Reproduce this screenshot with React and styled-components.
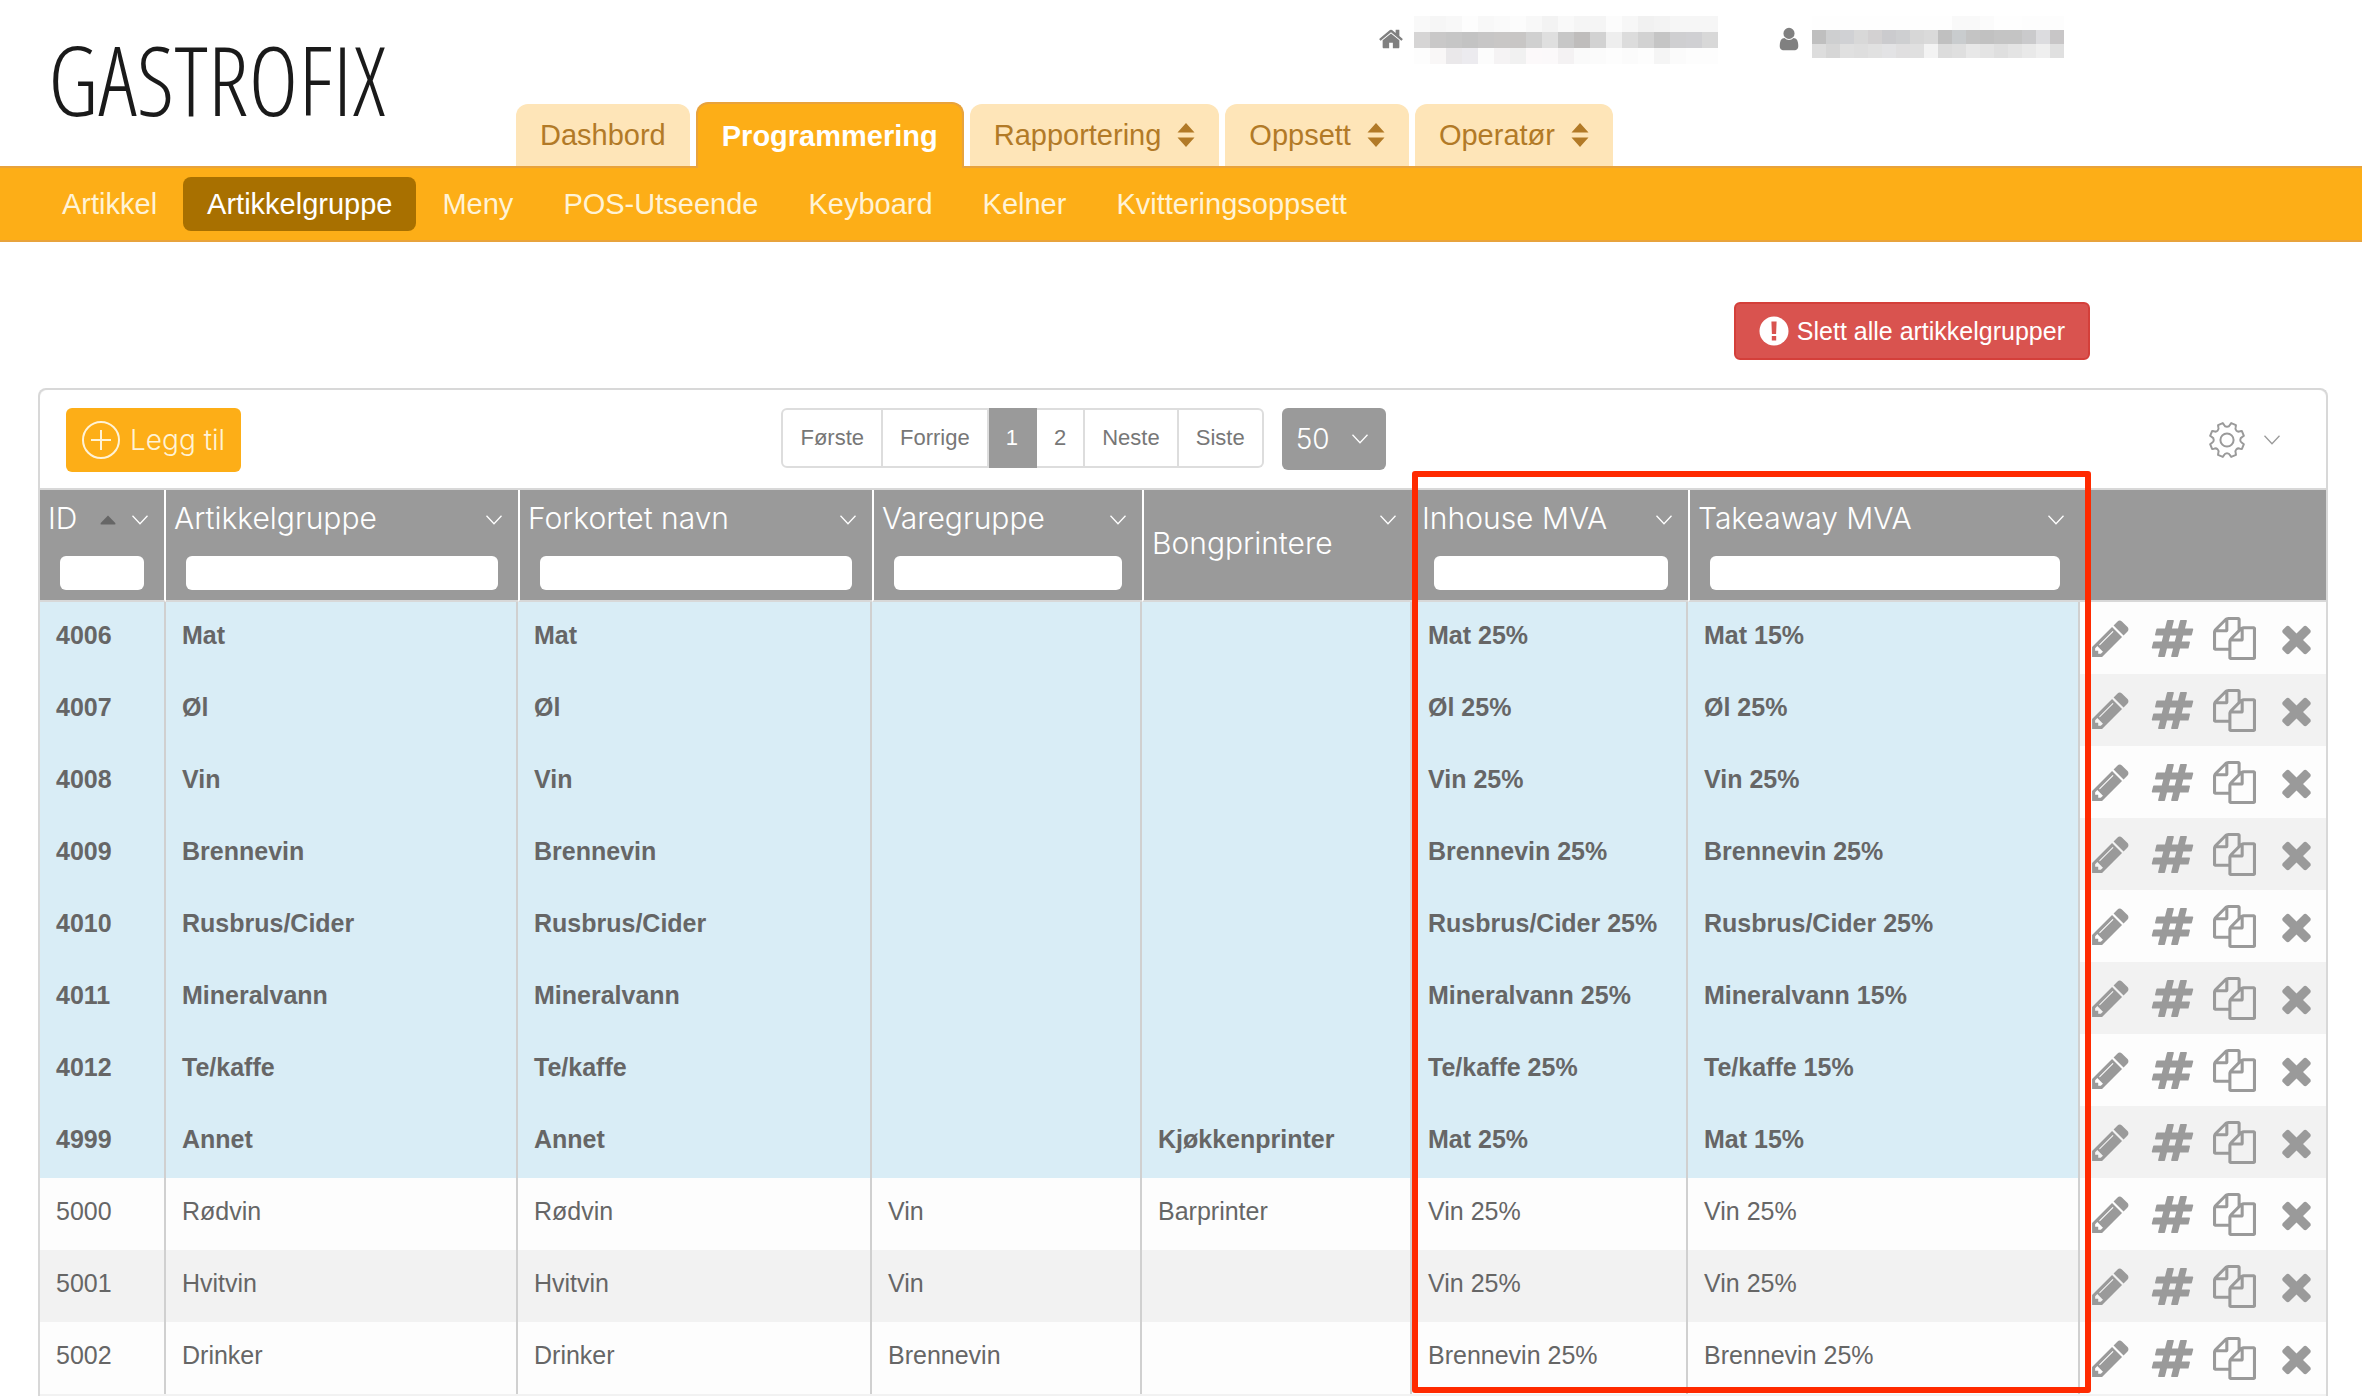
import React, { useState } from "react";
import styled, { createGlobalStyle } from "styled-components";

const GlobalStyle = createGlobalStyle`
  *, *::before, *::after {
    box-sizing: border-box;
  }
  body {
    margin: 0;
    background: #fff;
    color: #666;
    font-family: "Liberation Sans", Arial, sans-serif;
    font-size: 25px;
  }
  button, input, select {
    font: inherit;
    margin: 0;
  }
`;

const lightFont = `"Inter", "Liberation Sans", sans-serif`;

const Page = styled.div`
  display: flex;
  flex-direction: column;
  height: 100vh;
  overflow: hidden;
`;

const Header = styled.header`
  display: flex;
  height: 166px;
`;

const Logo = styled.a`
  display: flex;
  align-items: center;
  width: 516px;
  padding: 0 0 8px 48px;
  color: #1a1a1a;
  font-family: "Open Sans Condensed Light", "Roboto Condensed Light", "Roboto Thin", "Roboto", sans-serif;
  font-size: 96px;
  font-weight: 300;
  line-height: 1;
  text-decoration: none;
`;

const HeaderMain = styled.div`
  display: flex;
  flex: 1;
  flex-direction: column;
  justify-content: space-between;
`;

const Account = styled.div`
  display: flex;
  gap: 58px;
  padding: 16px 0 0 862px;
`;

const AccountItem = styled.div`
  display: flex;
  align-items: flex-start;
  gap: 10px;
  color: #808080;

  > svg {
    margin-top: 10px;
  }
`;

const Mosaic = styled.div`
  display: grid;
  grid-template-columns: repeat(${props => props.columns}, ${props => props.size}px);
  grid-auto-rows: ${props => props.size}px;
`;

const MosaicCell = styled.span`
  background: ${props => props.tone};
`;

const Tabs = styled.nav`
  display: flex;
  align-items: flex-end;
  gap: 6px;
  position: relative;
  z-index: 1;
`;

const Tab = styled.a`
  display: flex;
  align-items: center;
  gap: 16px;
  height: ${props => (props.$active ? 66 : 62)}px;
  margin-bottom: ${props => (props.$active ? -2 : 0)}px;
  padding: 0 24px;
  border: ${props => (props.$active ? "2px solid #e8a33c" : "0")};
  border-bottom: 0;
  border-radius: 12px 12px 0 0;
  background: ${props => (props.$active ? "#fdae17" : "#fee5b8")};
  color: ${props => (props.$active ? "#fff" : "#b27a27")};
  font-size: 29px;
  font-weight: ${props => (props.$active ? 700 : 400)};
  text-decoration: none;
`;

const SubNav = styled.nav`
  display: flex;
  align-items: center;
  gap: 2px;
  height: 76px;
  padding: 0 38px;
  border-top: 2px solid #e8a33c;
  border-bottom: 2px solid #e8a33c;
  background: #fdae17;
`;

const SubNavLink = styled.a`
  padding: 0 24px;
  border-radius: 8px;
  background: ${props => (props.$active ? "#a87000" : "transparent")};
  color: ${props => (props.$active ? "#fff" : "#fff3d6")};
  font-size: 29px;
  line-height: 54px;
  text-decoration: none;
`;

const Actions = styled.div`
  display: flex;
  justify-content: flex-end;
  padding: 60px 272px 28px 38px;
`;

const DangerButton = styled.button`
  display: flex;
  align-items: center;
  gap: 8px;
  height: 58px;
  padding: 0 23px;
  border: 2px solid #d43f3a;
  border-radius: 6px;
  background: #d9534f;
  color: #fff;
`;

const Panel = styled.main`
  flex: 1;
  margin: 0 34px 0 38px;
  border: 2px solid #d8d8d8;
  border-bottom: 0;
  border-radius: 8px 8px 0 0;
  background: #f2f2f2;
`;

const Toolbar = styled.div`
  display: grid;
  grid-template-columns: 4fr auto 5fr;
  align-items: start;
  height: 98px;
  padding: 18px 46px 0 26px;
  border-radius: 8px 8px 0 0;
  background: #fff;
`;

const AddButton = styled.button`
  display: flex;
  align-items: center;
  justify-self: start;
  gap: 10px;
  height: 64px;
  padding: 0 16px;
  border: 0;
  border-radius: 6px;
  background: #fdae17;
  color: #fff3d6;
  font-family: ${lightFont};
  font-size: 28px;
  font-weight: 300;
`;

const Paging = styled.div`
  display: flex;
  align-items: flex-start;
  gap: 18px;
`;

const PageList = styled.div`
  display: flex;
  height: 60px;
`;

const PageButton = styled.button`
  padding: 0 17px;
  border: 2px solid ${props => (props.$active ? "#9a9a9a" : "#ddd")};
  border-left-width: ${props => (props.$joined ? 0 : 2)}px;
  background: ${props => (props.$active ? "#9a9a9a" : "#fff")};
  color: ${props => (props.$active ? "#fff" : "#777")};
  font-size: 22px;

  &:first-child {
    border-radius: 6px 0 0 6px;
  }
  &:last-child {
    border-radius: 0 6px 6px 0;
  }
`;

const SizePicker = styled.div`
  display: grid;
  align-items: center;
  width: 104px;
  height: 62px;
  border-radius: 6px;
  background: #9a9a9a;
  color: #fff;

  > * {
    grid-area: 1 / 1;
  }
  > svg {
    justify-self: end;
    margin-right: 18px;
    pointer-events: none;
  }
`;

const SizeSelect = styled.select`
  width: 100%;
  height: 100%;
  padding: 0 14px;
  border: 0;
  background: transparent;
  color: #fff;
  appearance: none;
  font-family: ${lightFont};
  font-size: 28px;
  font-weight: 300;
`;

const SettingsButton = styled.button`
  display: flex;
  align-items: center;
  justify-self: end;
  gap: 18px;
  height: 64px;
  padding: 0;
  border: 0;
  background: transparent;
  color: #9a9a9a;
`;

const TableArea = styled.div`
  position: relative;
`;

const Table = styled.table`
  width: 100%;
  table-layout: fixed;
  border-spacing: 0;
  border-top: 2px solid #d8d8d8;
`;

const HeadCell = styled.th`
  height: 112px;
  padding: 0;
  border: 0 solid #fff;
  border-left-width: ${props => (props.$divider === "left" ? 2 : 0)}px;
  border-right-width: ${props => (props.$divider === "right" ? 2 : 0)}px;
  border-bottom: 2px solid #d8d8d8;
  background: #9a9a9a;
  color: #fff;
  font-family: ${lightFont};
  font-size: 30px;
  font-weight: 300;
  text-align: left;
  vertical-align: top;
`;

const HeadTitle = styled.div`
  display: flex;
  align-items: stretch;
  height: ${props => (props.$tall ? 110 : 60)}px;
  padding: 0 16px 0 8px;
`;

const HeadLabel = styled.label`
  flex: 1;
  align-self: center;
  padding-bottom: 4px;
  white-space: nowrap;
`;

const HeadIcons = styled.span`
  display: flex;
  align-items: center;
  gap: 16px;
  height: 60px;
`;

const Filter = styled.input`
  display: block;
  width: calc(100% - 40px);
  height: 34px;
  margin: 6px 20px 0;
  padding: 0 8px;
  border: 0;
  border-radius: 6px;
  background: #fff;
  color: #666;
  font-size: 22px;
`;

const Row = styled.tr`
  background: #fdfdfd;
  font-weight: ${props => (props.$top ? 700 : 400)};

  &:nth-child(even) {
    background: #f2f2f2;
  }
`;

const Cell = styled.td`
  height: 72px;
  padding: 0 16px 6px;
  border-right: 2px solid #d0d0d0;
  background: ${props => (props.$top ? "#d9edf6" : "transparent")};
  white-space: nowrap;
`;

const ActionCell = styled.td`
  padding: 0 9px;
`;

const RowActions = styled.div`
  display: flex;
  gap: 19px;
`;

const IconButton = styled.button`
  display: flex;
  padding: 0;
  border: 0;
  background: transparent;
  color: #9a9a9a;
`;

// Outline round the two VAT columns
const Highlight = styled.div`
  position: absolute;
  top: -17px;
  bottom: 1px;
  left: 60%;
  right: 10.3%;
  border: 6px solid #ff2a00;
  border-radius: 3px;
  pointer-events: none;
`;

const glyphs = {
  pencil:
    "M491 1536l91-91-235-235-91 91v107h128v128h107zm523-928q0-22-22-22-10 0-17 7l-542 542q-7 7-7 17 0 22 22 22 10 0 17-7l542-542q7-7 7-17zm-54-192l416 416-832 832h-416v-416zm683 96q0 53-37 90l-166 166-416-416 166-165q36-38 90-38 53 0 91 38l235 234q37 39 37 91z",
  hash:
    "M991 1024l64-256h-254l-64 256h254zm768-504l-56 224q-7 24-31 24h-327l-64 256h311q15 0 25 12 10 14 6 28l-56 224q-5 24-31 24h-327l-81 328q-7 24-31 24h-224q-16 0-26-12-9-12-6-28l78-312h-254l-81 328q-7 24-31 24h-225q-15 0-25-12-9-12-6-28l78-312h-311q-15 0-25-12-9-12-6-28l56-224q7-24 31-24h327l64-256h-311q-15 0-25-12-10-14-6-28l56-224q5-24 31-24h327l81-328q7-24 32-24h224q15 0 25 12 9 12 6 28l-78 312h254l81-328q7-24 32-24h224q15 0 25 12 9 12 6 28l-78 312h311q15 0 25 12 9 12 6 28z",
  copy:
    "M1696 384q40 0 68 28t28 68v1216q0 40-28 68t-68 28h-960q-40 0-68-28t-28-68v-288h-544q-40 0-68-28t-28-68v-672q0-40 20-88t48-76l408-408q28-28 76-48t88-20h416q40 0 68 28t28 68v328q68-40 128-40h416zm-544 213l-299 299h299v-299zm-640-384l-299 299h299v-299zm196 647l316-316v-416h-384v416q0 40-28 68t-68 28h-416v640h512v-256q0-40 20-88t48-76zm956 804v-1152h-384v416q0 40-28 68t-68 28h-416v640h896z",
  remove:
    "M1490 1322q0 40-28 68l-136 136q-28 28-68 28t-68-28l-294-294-294 294q-28 28-68 28t-68-28l-136-136q-28-28-28-68t28-68l294-294-294-294q-28-28-28-68t28-68l136-136q28-28 68-28t68 28l294 294 294-294q28-28 68-28t68 28l136 136q28 28 28 68t-28 68l-294 294 294 294q28 28 28 68z",
  home:
    "M1472 992v480q0 26-19 45t-45 19h-384v-384h-256v384h-384q-26 0-45-19t-19-45v-480q0-1 .5-3t.5-3l575-474 575 474q1 2 1 6zm223-69l-62 74q-8 9-21 11h-3q-13 0-21-7l-692-577-692 577q-12 8-24 7-13-2-21-11l-62-74q-8-10-7-23.5t11-21.5l719-599q32-26 76-26t76 26l244 204v-195q0-14 9-23t23-9h192q14 0 23 9t9 23v408l219 182q10 8 11 21.5t-7 23.5z",
  user:
    "M1536 1399q0 109-62.5 187t-150.5 78h-854q-88 0-150.5-78t-62.5-187q0-85 8.5-160.5t31.5-152 58.5-131 94-89 134.5-34.5q131 128 313 128t313-128q76 0 134.5 34.5t94 89 58.5 131 31.5 152 8.5 160.5zm-256-887q0 159-112.5 271.5t-271.5 112.5-271.5-112.5-112.5-271.5 112.5-271.5 271.5-112.5 271.5 112.5 112.5 271.5z"
};

const Glyph = ({ name, size }) => (
  <svg width={size} height={size} viewBox="0 0 1792 1792" fill="currentColor" aria-hidden="true">
    <path d={glyphs[name]} />
  </svg>
);

const Chevron = () => (
  <svg width="16" height="10" viewBox="0 0 16 10" fill="none" stroke="currentColor" strokeWidth="1.3" aria-hidden="true">
    <path d="M0.5 0.8L8 8.8L15.5 0.8" />
  </svg>
);

const SortUp = () => (
  <svg width="16" height="10" viewBox="0 0 16 10" fill="#666" aria-hidden="true">
    <path d="M8 0.5L15.3 8Q16 9.6 14.6 9.6H1.4Q0 9.6 0.7 8Z" />
  </svg>
);

const UpDown = () => (
  <svg width="18" height="24" viewBox="0 0 18 24" fill="currentColor" aria-hidden="true">
    <path d="M9 0L17.5 9.6H0.5ZM9 24L17.5 14.4H0.5Z" />
  </svg>
);

const PlusCircle = () => (
  <svg width="38" height="38" viewBox="0 0 38 38" fill="none" stroke="currentColor" strokeWidth="2" aria-hidden="true">
    <circle cx="19" cy="19" r="18" />
    <path d="M19 9V29M9 19H29" />
  </svg>
);

const Warning = () => (
  <svg width="30" height="30" viewBox="0 0 30 30" aria-hidden="true">
    <circle cx="15" cy="15" r="14.5" fill="#fff" />
    <path d="M12.4 5.5H17.6L17.1 18H12.9ZM12.8 20H17.2V24.5H12.8Z" fill="#d9534f" />
  </svg>
);

// Eight teeth: one is drawn and turned round the centre
const toothAngles = [0, 45, 90, 135, 180, 225, 270, 315];
const Gear = () => {
  const points = toothAngles
    .map((angle, i) => {
      const at = (r, deg) => {
        const a = ((angle + deg) * Math.PI) / 180;
        return `${(19 + r * Math.sin(a)).toFixed(2)} ${(19 - r * Math.cos(a)).toFixed(2)}`;
      };
      return `${i ? "L" : "M"}${at(15.5, 11)}L${at(17.4, 14)}L${at(17.4, 31)}L${at(15.5, 34)}A3.2 3.2 0 0 0 ${at(15.5, 56)}`;
    })
    .join("");
  return (
    <svg width="38" height="38" viewBox="0 0 38 38" fill="none" stroke="currentColor" strokeWidth="2" strokeLinejoin="round" aria-hidden="true">
      <path d={`${points}Z`} />
      <circle cx="19" cy="19" r="6.6" />
    </svg>
  );
};

const placeTones = [
  "#f9f9f9 #f6f6f6 #f8f8f8 #fdfdfd #f8f8f8 #fafafa #fcfcfc #f8f8f8 #f3f3f3 #f9f9f9 #f5f5f5 #f5f5f5 #fcfcfc #f7f7f7 #f1f1f1 #f3f3f3 #f6f6f6 #f6f6f6 #f6f6f6",
  "#d6d5d5 #c9c8c8 #c6c6c6 #c3c3c3 #c7c6c6 #c9c7c6 #c8c6c5 #d0d0d0 #dfdfdf #c7c7c7 #bfbdbc #d2d2d2 #eeeeee #dcdcdc #d2d2d2 #c5c5c5 #cfcfd1 #d0d0d3 #d8d8d8",
  "#fdfdfd #f9f7f7 #eae8ea #ecebef #fcfcfc #f5f3f4 #f1f1f1 #fcf9fa #fbf9fa #f4f2f3 #fafafa #fbfbfb #fdfdfd #fbfbfb #fdfdfd #f5f5f5 #fbfbfb #fdfdfd #fdfdfd"
].join(" ").split(" ");

const userTones = [
  "#fefefe #fefefe #fefefe #fefefe #fefefe #fefefe #fefefe #fefefe #fefefe #fefefe #f9f9f9 #f9f9f9 #fbfbfb #fefefe #fefefe #fdfdfd #fdfdfd #fdfdfd",
  "#bfbfbf #cecfd0 #d0d1d4 #d8d8d8 #d3d1d2 #cbcbce #cecfd1 #d7d7d7 #dadada #c0c0c0 #c9ccce #c4c4c4 #c1c1c1 #c4c4c4 #c4c4c4 #cacacc #dcdcdf #c8c6c7",
  "#dddddd #d6d6d6 #e0e0e0 #dedede #e1e1e1 #e3e3e5 #e0dfe0 #e0e0e0 #f3f3f3 #dcdcdc #dfdfdf #e8e8e8 #e4e4e4 #dfdfdf #e4e4e4 #e9e9e9 #efefef #e0e0e0"
].join(" ").split(" ");

const tabs = [
  { label: "Dashbord" },
  { label: "Programmering", active: true },
  { label: "Rapportering", menu: true },
  { label: "Oppsett", menu: true },
  { label: "Operatør", menu: true }
];

const subPages = [
  "Artikkel",
  "Artikkelgruppe",
  "Meny",
  "POS-Utseende",
  "Keyboard",
  "Kelner",
  "Kvitteringsoppsett"
];

const pages = ["Første", "Forrige", "1", "2", "Neste", "Siste"];

const columns = [
  { key: "id", label: "ID", width: 126, filter: true, sorted: true, divider: "right" },
  { key: "group", label: "Artikkelgruppe", width: 352, filter: true },
  { key: "short", label: "Forkortet navn", width: 354, filter: true, divider: "left" },
  { key: "parent", label: "Varegruppe", width: 270, filter: true, divider: "left" },
  { key: "printer", label: "Bongprintere", width: 270, divider: "left" },
  { key: "inhouse", label: "Inhouse MVA", width: 276, filter: true, divider: "left" },
  { key: "takeaway", label: "Takeaway MVA", width: 392, filter: true, divider: "left" }
];

const articleGroups = [
  { id: 4006, group: "Mat", inhouse: "Mat 25%", takeaway: "Mat 15%", top: true },
  { id: 4007, group: "Øl", inhouse: "Øl 25%", takeaway: "Øl 25%", top: true },
  { id: 4008, group: "Vin", inhouse: "Vin 25%", takeaway: "Vin 25%", top: true },
  { id: 4009, group: "Brennevin", inhouse: "Brennevin 25%", takeaway: "Brennevin 25%", top: true },
  { id: 4010, group: "Rusbrus/Cider", inhouse: "Rusbrus/Cider 25%", takeaway: "Rusbrus/Cider 25%", top: true },
  { id: 4011, group: "Mineralvann", inhouse: "Mineralvann 25%", takeaway: "Mineralvann 15%", top: true },
  { id: 4012, group: "Te/kaffe", inhouse: "Te/kaffe 25%", takeaway: "Te/kaffe 15%", top: true },
  { id: 4999, group: "Annet", printer: "Kjøkkenprinter", inhouse: "Mat 25%", takeaway: "Mat 15%", top: true },
  { id: 5000, group: "Rødvin", parent: "Vin", printer: "Barprinter", inhouse: "Vin 25%", takeaway: "Vin 25%" },
  { id: 5001, group: "Hvitvin", parent: "Vin", inhouse: "Vin 25%", takeaway: "Vin 25%" },
  { id: 5002, group: "Drinker", parent: "Brennevin", inhouse: "Brennevin 25%", takeaway: "Brennevin 25%" }
];

const rowActions = [
  { icon: "pencil", label: "Rediger" },
  { icon: "hash", label: "Nummer" },
  { icon: "copy", label: "Kopier" },
  { icon: "remove", label: "Slett" }
];

const HeaderBar = () => (
  <Header>
    <Logo href="#">GASTROFIX</Logo>
    <HeaderMain>
      <Account>
        <AccountItem>
          <Glyph name="home" size={26} />
          <Mosaic columns={19} size={16}>
            {placeTones.map((tone, i) => (
              <MosaicCell key={i} tone={tone} />
            ))}
          </Mosaic>
        </AccountItem>
        <AccountItem>
          <Glyph name="user" size={26} />
          <Mosaic columns={18} size={14}>
            {userTones.map((tone, i) => (
              <MosaicCell key={i} tone={tone} />
            ))}
          </Mosaic>
        </AccountItem>
      </Account>
      <Tabs>
        {tabs.map(tab => (
          <Tab key={tab.label} href="#" $active={tab.active}>
            {tab.label}
            {tab.menu && <UpDown />}
          </Tab>
        ))}
      </Tabs>
    </HeaderMain>
  </Header>
);

const ColumnHead = ({ column }) => (
  <HeadCell $divider={column.divider} scope="col">
    <HeadTitle $tall={!column.filter}>
      <HeadLabel
        as={column.filter ? "label" : "span"}
        htmlFor={column.filter ? `filter-${column.key}` : undefined}
      >
        {column.label}
      </HeadLabel>
      <HeadIcons>
        {column.sorted && <SortUp />}
        <Chevron />
      </HeadIcons>
    </HeadTitle>
    {column.filter && <Filter type="text" id={`filter-${column.key}`} />}
  </HeadCell>
);

const GroupRow = ({ item }) => (
  <Row $top={item.top}>
    {columns.map(column => (
      <Cell key={column.key} $top={item.top}>
        {column.key === "short" ? item.group : item[column.key]}
      </Cell>
    ))}
    <ActionCell>
      <RowActions>
        {rowActions.map(action => (
          <IconButton key={action.icon} type="button" aria-label={action.label}>
            <Glyph name={action.icon} size={43} />
          </IconButton>
        ))}
      </RowActions>
    </ActionCell>
  </Row>
);

const App = () => {
  const [pageSize, setPageSize] = useState("50");

  return (
    <Page>
      <GlobalStyle />
      <HeaderBar />
      <SubNav>
        {subPages.map(name => (
          <SubNavLink key={name} href="#" $active={name === "Artikkelgruppe"}>
            {name}
          </SubNavLink>
        ))}
      </SubNav>
      <Actions>
        <DangerButton type="button">
          <Warning />
          Slett alle artikkelgrupper
        </DangerButton>
      </Actions>
      <Panel>
        <Toolbar>
          <AddButton type="button">
            <PlusCircle />
            Legg til
          </AddButton>
          <Paging>
            <PageList>
              {pages.map((name, i) => (
                <PageButton key={name} type="button" $joined={i > 0} $active={name === "1"}>
                  {name}
                </PageButton>
              ))}
            </PageList>
            <SizePicker>
              <SizeSelect
                aria-label="Antall per side"
                value={pageSize}
                onChange={e => setPageSize(e.target.value)}
              >
                <option>25</option>
                <option>50</option>
                <option>100</option>
              </SizeSelect>
              <Chevron />
            </SizePicker>
          </Paging>
          <SettingsButton type="button" aria-label="Innstillinger">
            <Gear />
            <Chevron />
          </SettingsButton>
        </Toolbar>
        <TableArea>
          <Table>
            <colgroup>
              {columns.map(column => (
                <col key={column.key} width={column.width} />
              ))}
              <col width="246" />
            </colgroup>
            <thead>
              <tr>
                {columns.map(column => (
                  <ColumnHead key={column.key} column={column} />
                ))}
                <HeadCell as="td" />
              </tr>
            </thead>
            <tbody>
              {articleGroups.map(item => (
                <GroupRow key={item.id} item={item} />
              ))}
            </tbody>
          </Table>
          <Highlight />
        </TableArea>
      </Panel>
    </Page>
  );
};

export default App;
